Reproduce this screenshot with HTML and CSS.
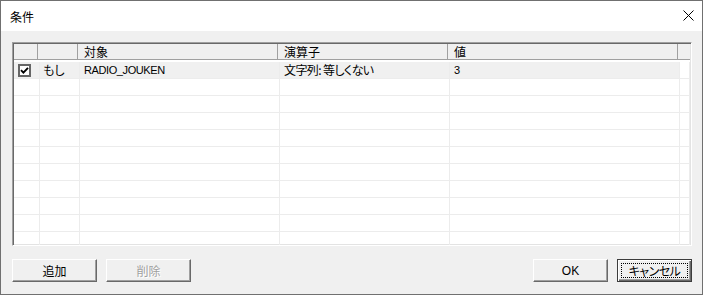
FILE: index.html
```html
<!DOCTYPE html>
<html lang="ja">
<head>
  <meta charset="UTF-8" />
  <title>条件</title>
  <link rel="stylesheet" href="styles.css">
</head>
<body>

  <div class="dialog">
    <div class="titlebar">
      <span class="title">条件</span>
      <svg class="close" width="11" height="11" viewBox="0 0 11 11">
        <path d="M0.5 0.5 L10.5 10.5 M10.5 0.5 L0.5 10.5" stroke="#000" stroke-width="1" fill="none"/>
      </svg>
    </div>

    <div class="content">
      <div class="grid">
        <div class="grid-head">
          <div class="hcell"></div>
          <div class="hcell"></div>
          <div class="hcell">対象</div>
          <div class="hcell">演算子</div>
          <div class="hcell">値</div>
          <div class="hcell last"></div>
        </div>
        <div class="grid-body">
          <div class="row selected">
            <div class="cell check-cell">
              <span class="checkbox">
                <svg width="9" height="9" viewBox="0 0 9 9">
                  <path d="M1 4.2 L3.4 6.6 L8 1.8" stroke="#000" stroke-width="1.9" fill="none"/>
                </svg>
              </span>
            </div>
            <div class="cell">もし</div>
            <div class="cell latin">RADIO_JOUKEN</div>
            <div class="cell narrow">文字列: 等しくない</div>
            <div class="cell latin">3</div>
            <div class="cell last"></div>
          </div>
          <div class="row"><div class="cell"></div><div class="cell"></div><div class="cell"></div><div class="cell"></div><div class="cell"></div><div class="cell last"></div></div>
          <div class="row"><div class="cell"></div><div class="cell"></div><div class="cell"></div><div class="cell"></div><div class="cell"></div><div class="cell last"></div></div>
          <div class="row"><div class="cell"></div><div class="cell"></div><div class="cell"></div><div class="cell"></div><div class="cell"></div><div class="cell last"></div></div>
          <div class="row"><div class="cell"></div><div class="cell"></div><div class="cell"></div><div class="cell"></div><div class="cell"></div><div class="cell last"></div></div>
          <div class="row"><div class="cell"></div><div class="cell"></div><div class="cell"></div><div class="cell"></div><div class="cell"></div><div class="cell last"></div></div>
          <div class="row"><div class="cell"></div><div class="cell"></div><div class="cell"></div><div class="cell"></div><div class="cell"></div><div class="cell last"></div></div>
          <div class="row"><div class="cell"></div><div class="cell"></div><div class="cell"></div><div class="cell"></div><div class="cell"></div><div class="cell last"></div></div>
          <div class="row"><div class="cell"></div><div class="cell"></div><div class="cell"></div><div class="cell"></div><div class="cell"></div><div class="cell last"></div></div>
          <div class="row"><div class="cell"></div><div class="cell"></div><div class="cell"></div><div class="cell"></div><div class="cell"></div><div class="cell last"></div></div>
          <div class="row"><div class="cell"></div><div class="cell"></div><div class="cell"></div><div class="cell"></div><div class="cell"></div><div class="cell last"></div></div>
        </div>
      </div>

      <div class="buttons">
        <div class="btn-group">
          <button class="btn wide">追加</button>
          <button class="btn wide" disabled>削除</button>
        </div>
        <div class="btn-group">
          <button class="btn latin">OK</button>
          <button class="btn default"><span class="focus">キャンセル</span></button>
        </div>
      </div>
    </div>
  </div>

</body>
</html>
```

FILE: styles.css
```css
body {
  margin: 0;
  padding: 0;
  background: #f0f0f0;
  font-family: "Noto Sans CJK JP", "Noto Sans", sans-serif;
  font-size: 12px;
  color: #000;
}

.dialog {
  width: 703px;
  height: 295px;
  box-sizing: border-box;
  border: 1px solid #707070;
  background: #f0f0f0;
  overflow: hidden;
}

.titlebar {
  height: 30px;
  background: #fff;
  display: flex;
  align-items: center;
  justify-content: space-between;
  padding: 0 8px 0 9px;
}

.title {
  line-height: 14px;
  margin-top: 1px;
}

.close {
  display: block;
  margin-top: -1px;
}

.content {
  padding: 11px 10px 12px 11px;
}

.grid {
  height: 204px;
  box-sizing: border-box;
  border: 1px solid;
  border-color: #a0a0a0 #fff #fff #a0a0a0;
  padding: 1px;
  box-shadow: inset 1px 1px #696969, inset -1px -1px #e3e3e3;
  background: #fff;
  overflow: hidden;
}

.grid-head,
.row {
  display: grid;
  grid-template-columns: 26px 40px 200px 170px 230px 1fr;
}

.grid-head {
  height: 15px;
  background: #f0f0f0;
  border-bottom: 1px solid #a0a0a0;
}

.hcell {
  border-right: 1px solid #a0a0a0;
  margin-right: 2px;
  padding-left: 4px;
  line-height: 15px;
  white-space: nowrap;
}

.hcell.last {
  border-right: none;
}

.grid-body {
  margin-top: 2px;
}

.row {
  height: 17px;
}

.cell {
  border-right: 1px solid #ececec;
  border-bottom: 1px solid #ececec;
  padding-left: 4px;
  line-height: 16px;
  white-space: nowrap;
  font-feature-settings: "palt";
}

.cell:nth-child(2) {
  padding-left: 3px;
}

.cell.narrow {
  letter-spacing: -0.6px;
}

.latin {
  font-family: "Liberation Sans", "Noto Sans CJK JP", sans-serif;
  font-size: 11px;
  letter-spacing: -0.4px;
}

.row.selected .cell {
  background: #f0f0f0;
}

.row.selected .cell.last {
  background: #fff;
}

.check-cell {
  padding-left: 4px;
  display: flex;
  align-items: center;
}

.checkbox {
  width: 13px;
  height: 13px;
  box-sizing: border-box;
  border: 2px solid #666;
  background: #fff;
  display: flex;
  align-items: center;
  justify-content: center;
}

.checkbox svg {
  display: block;
}

.buttons {
  display: flex;
  justify-content: space-between;
  margin-top: 13px;
}

.btn-group {
  display: flex;
  gap: 9px;
}

.btn {
  width: 75px;
  height: 23px;
  box-sizing: border-box;
  padding: 0;
  font-family: "Noto Sans CJK JP", "Noto Sans", sans-serif;
  font-size: 12px;
  color: #000;
  background: #f0f0f0;
  border: 1px solid;
  border-color: #fff #696969 #696969 #fff;
  box-shadow: inset -1px -1px #a0a0a0;
  line-height: 20px;
}

.btn.latin {
  font-family: "Liberation Sans", "Noto Sans CJK JP", sans-serif;
  font-size: 12px;
  letter-spacing: 0;
}

.btn.wide {
  width: 85px;
}

.btn:disabled {
  color: #a0a0a0;
  text-shadow: 1px 1px #fff;
}

.btn.default {
  border: 1px solid #3c3c3c;
  box-shadow: inset 1px 1px #fff, inset -1px -1px #696969, inset -2px -2px #a0a0a0;
  padding: 3px;
}

.focus {
  display: block;
  height: 15px;
  line-height: 14px;
  border: 1px dotted #000;
  box-sizing: border-box;
  letter-spacing: -0.5px;
  font-feature-settings: "palt";
}
```
